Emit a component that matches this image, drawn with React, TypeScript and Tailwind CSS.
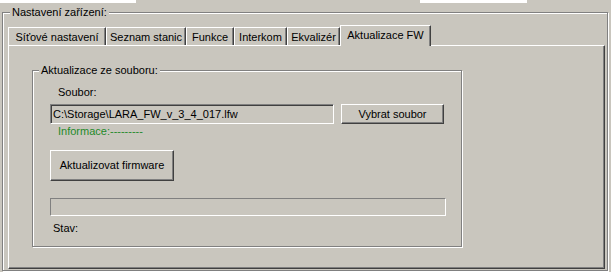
import React from "react";

const tabs = [
  { label: "Síťové nastavení", w: "w-[98px]" },
  { label: "Seznam stanic", w: "w-[80px]" },
  { label: "Funkce", w: "w-[48px]" },
  { label: "Interkom", w: "w-[53px]" },
  { label: "Ekvalizér", w: "w-[53px]" },
];

const raised =
  "border-t border-l border-white border-r border-b border-r-[#404040] border-b-[#404040] shadow-[inset_-1px_-1px_0_#808080]";

const App = () => {
  return (
    <div className="w-[611px] h-[272px] overflow-hidden bg-[#c9c6be] text-black font-['Liberation_Sans',Arial,sans-serif] text-[11px] leading-[13px]">
      {/* leftover edge of the window above */}
      <div className="flex h-[3px]">
        <div className="w-[136px] bg-white" />
        <div className="w-[284px]" />
        <div className="w-[107px] bg-white" />
      </div>

      {/* Nastavení zařízení group */}
      <div className="relative mt-[9px] ml-[2px] w-[606px] h-[259px] border border-[#808080] shadow-[inset_1px_1px_0_#fff,1px_1px_0_#fff] pl-[5px] pt-[12px]">
        <span className="absolute left-[7px] top-[-7px] bg-[#c9c6be] px-[2px]">
          Nastavení zařízení:
        </span>

        {/* tab strip */}
        <div className="flex items-end h-[20px]">
          {tabs.map((t) => (
            <div
              key={t.label}
              className={`${t.w} h-[18px] flex justify-center pt-[3px] border-t border-l border-white border-r border-r-[#404040] shadow-[inset_-1px_0_0_#808080]`}
            >
              {t.label}
            </div>
          ))}
          <div className="relative z-10 -mb-px w-[91px] h-[21px] flex justify-center pt-[3px] bg-[#c9c6be] border-t border-l border-white border-r border-r-[#404040] shadow-[inset_-1px_0_0_#808080]">
            Aktualizace FW
          </div>
        </div>

        {/* tab page */}
        <div className="w-[597px] h-[224px] border-t border-l border-white border-r border-b border-r-[#404040] border-b-[#404040] shadow-[inset_-1px_-1px_0_#808080] pl-[23px] pt-[24px]">
          <div className="relative w-[430px] h-[177px] border border-[#808080] shadow-[inset_1px_1px_0_#fff,1px_1px_0_#fff] pl-[17px] pt-[15px]">
            <span className="absolute left-[6px] top-[-7px] bg-[#c9c6be] px-[2px]">
              Aktualizace ze souboru:
            </span>

            <div className="pl-[8px]">Soubor:</div>

            <div className="flex mt-[5px] gap-[7px]">
              <div className="w-[284px] h-[20px] flex items-center pl-[2px] border-t border-l border-[#808080] border-b border-r border-b-white border-r-white shadow-[inset_1px_1px_0_#404040]">
                C:\Storage\LARA_FW_v_3_4_017.lfw
              </div>
              <div className={`w-[103px] h-[20px] flex items-center justify-center ${raised}`}>
                Vybrat soubor
              </div>
            </div>

            <div className="pl-[8px] mt-[1px] text-[#1f8a2a]">Informace:---------</div>

            <div className={`mt-[12px] w-[124px] h-[31px] flex items-center justify-center ${raised}`}>
              Aktualizovat firmware
            </div>

            <div className="mt-[17px] w-[396px] h-[18px] border-t border-l border-[#808080] border-b border-r border-b-white border-r-white" />

            <div className="mt-[6px] pl-[3px]">Stav:</div>
          </div>
        </div>
      </div>
    </div>
  );
};

export default App;
